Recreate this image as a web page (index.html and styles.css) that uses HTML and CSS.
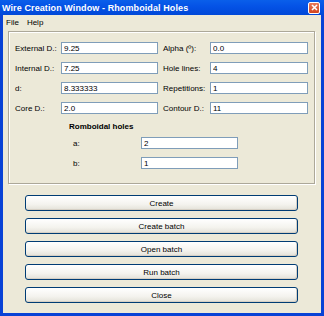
FILE: index.html
```html
<!DOCTYPE html>
<html>

<head>
  <title>Wire Creation Window</title>
  <link rel="stylesheet" href="styles.css">
</head>

<body>
  <div class="window">
    <div class="titlebar">
      <span class="title">Wire Creation Window - Rhomboidal Holes</span>
      <span class="close-btn">
        <svg width="7" height="7" viewBox="0 0 7 7">
          <path d="M1 1 L6 6 M6 1 L1 6" stroke="#fff" stroke-width="1.6" />
        </svg>
      </span>
    </div>
    <div class="menubar">
      <span class="menu-item">File</span>
      <span class="menu-item">Help</span>
    </div>

    <div class="client">
      <div class="panel">
        <div class="fields">
          <label>External D.:</label>
          <input type="text" value="9.25">
          <label class="right-label">Alpha (º):</label>
          <input type="text" value="0.0">

          <label>Internal D.:</label>
          <input type="text" value="7.25">
          <label class="right-label">Hole lines:</label>
          <input type="text" value="4">

          <label>d:</label>
          <input type="text" value="8.333333">
          <label class="right-label">Repetitions:</label>
          <input type="text" value="1">

          <label>Core D.:</label>
          <input type="text" value="2.0">
          <label class="right-label">Contour D.:</label>
          <input type="text" value="11">
        </div>

        <div class="rhomb">
          <div class="rhomb-title">Romboidal holes</div>
          <div class="rhomb-row">
            <label>a:</label>
            <input type="text" value="2">
          </div>
          <div class="rhomb-row">
            <label>b:</label>
            <input type="text" value="1">
          </div>
        </div>
      </div>

      <div class="buttons">
        <button>Create</button>
        <button>Create batch</button>
        <button>Open batch</button>
        <button>Run batch</button>
        <button>Close</button>
      </div>
    </div>
  </div>
</body>

</html>
```

FILE: styles.css
```css
* {
  margin: 0;
  padding: 0;
  box-sizing: border-box;
  font-family: 'Liberation Sans', Arial, sans-serif;
}

body {
  width: 324px;
  height: 316px;
  overflow: hidden;
  background-color: #ece9d8;
}

.window {
  width: 324px;
  height: 316px;
  display: flex;
  flex-direction: column;
  border: 3px solid #0842d6;
  border-top: none;
  background-color: #ece9d8;
}

.titlebar {
  height: 15px;
  margin: 0 -3px;
  padding: 0 4px 0 2px;
  display: flex;
  align-items: center;
  justify-content: space-between;
  background: linear-gradient(to bottom, #0a5fea 0%, #0553e6 40%, #0048d8 100%);
}

.title {
  color: #fff;
  font-weight: bold;
  font-size: 9px;
  letter-spacing: 0.1px;
}

.close-btn {
  width: 12px;
  height: 12px;
  display: flex;
  align-items: center;
  justify-content: center;
  border: 1px solid #fff;
  border-radius: 2px;
  background: linear-gradient(to bottom, #e8795a, #d2451f);
}

.menubar {
  height: 15px;
  display: flex;
  align-items: center;
  padding-left: 3px;
  gap: 8px;
  font-size: 8px;
}

.menu-item {
  color: #000;
}

.client {
  flex: 1;
  padding: 1px 0 0 5px;
}

.panel {
  width: 307px;
  height: 153px;
  border: 1px solid #aca899;
  box-shadow: inset 1px 1px 0 #fff, 1px 1px 0 #fff;
  padding: 10px 0 0 6px;
}

.fields {
  display: grid;
  grid-template-columns: 46px 97px 52px 98px;
  grid-auto-rows: 12px;
  row-gap: 8px;
  align-items: center;
}

label {
  font-size: 8px;
  color: #000;
}

.right-label {
  padding-left: 5px;
}

input {
  height: 12px;
  border: 1px solid #7f9db9;
  background-color: #fff;
  font-size: 8px;
  padding-left: 2px;
  color: #000;
}

.rhomb {
  padding: 7px 0 0 54px;
}

.rhomb-title {
  font-size: 8px;
  font-weight: bold;
  height: 12px;
  line-height: 12px;
}

.rhomb-row {
  display: flex;
  align-items: center;
  margin-top: 4px;
}

.rhomb-row + .rhomb-row {
  margin-top: 8px;
}

.rhomb-row label {
  width: 72px;
  padding-left: 4px;
}

.rhomb-row input {
  width: 97px;
}

.buttons {
  display: flex;
  flex-direction: column;
  gap: 7px;
  padding: 11px 0 0 17px;
}

.buttons button {
  width: 273px;
  height: 16px;
  border: 1px solid #003c74;
  border-radius: 3px;
  background: linear-gradient(to bottom, #ffffff 0%, #f4f3ee 60%, #e3e1d8 100%);
  box-shadow: inset -1px -1px 0 #d6d0c5;
  font-size: 8px;
  color: #000;
}
```
